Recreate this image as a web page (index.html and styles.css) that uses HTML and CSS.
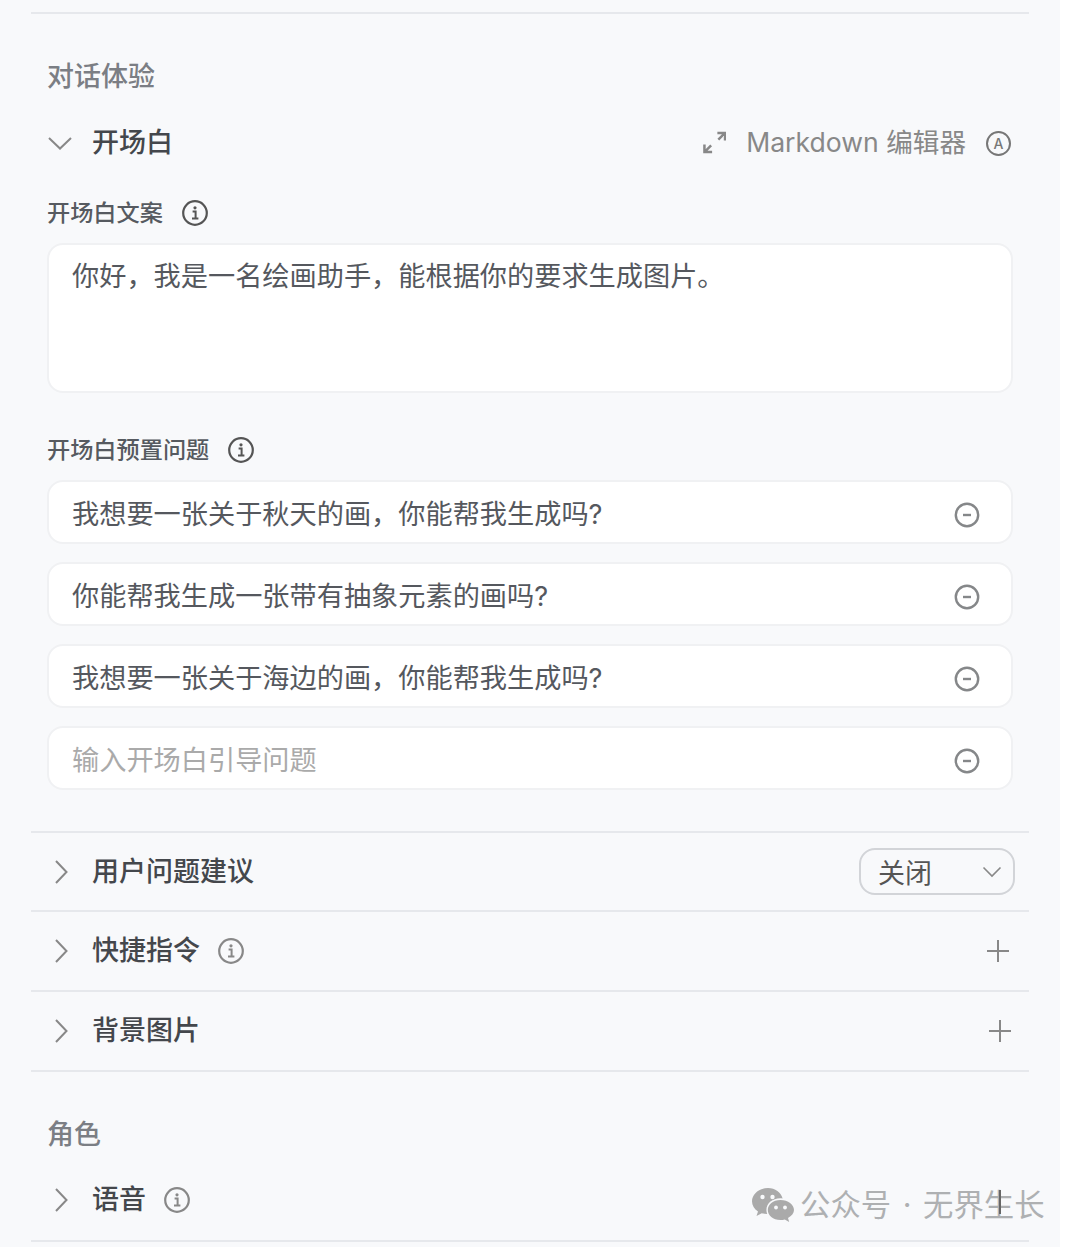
FILE: index.html
```html
<!DOCTYPE html>
<html lang="zh-CN">
<head>
    <meta charset="UTF-8">
    <meta name="viewport" content="width=device-width, initial-scale=1.0">
    <title>对话体验</title>
    <link rel="stylesheet" href="styles.css">
</head>
<body>
    <svg class="icon-defs" width="0" height="0">
        <symbol id="icon-info" viewBox="0 0 28 28">
            <circle cx="14" cy="14" r="11.8" fill="none" stroke="currentColor" stroke-width="2.2"/>
            <circle cx="14" cy="8.8" r="1.6" fill="currentColor"/>
            <path d="M11.6 12.4H14.6V19.2M11 19.6H17.4" fill="none" stroke="currentColor" stroke-width="2"/>
        </symbol>
        <symbol id="icon-minus" viewBox="0 0 26 26">
            <circle cx="13" cy="13" r="11.2" fill="none" stroke="currentColor" stroke-width="2.400"/>
            <path d="M9 13H17" fill="none" stroke="currentColor" stroke-width="2.400"/>
        </symbol>
        <symbol id="icon-right" viewBox="0 0 14 26">
            <path d="M2 2L12.5 13L2 24" fill="none" stroke="currentColor" stroke-width="2"/>
        </symbol>
        <symbol id="icon-plus" viewBox="0 0 24 24">
            <path d="M12 1V23M1 12H23" fill="none" stroke="currentColor" stroke-width="2"/>
        </symbol>
    </svg>

    <div class="panel">
        <hr class="rule top-rule">

        <h2 class="section-title">对话体验</h2>

        <div class="row-head open-head">
            <svg class="chevron-down" viewBox="0 0 26 14"><path d="M2 2L13 12.5L24 2" fill="none" stroke="currentColor" stroke-width="2"/></svg>
            <h3 class="row-title">开场白</h3>
            <div class="row-tools">
                <svg class="expand" viewBox="0 0 24 24"><path d="M15 2H23V10M22.500 2.500L16 9M1.500 14V22H9.500M2 21.500L8.500 15" fill="none" stroke="currentColor" stroke-width="2.600"/></svg>
                <span class="md-label">Markdown 编辑器</span>
                <span class="auto-badge">A</span>
            </div>
        </div>

        <div class="field-label first-label">开场白文案 <svg class="info"><use href="#icon-info"/></svg></div>
        <div class="card text-card">你好，我是一名绘画助手，能根据你的要求生成图片。</div>

        <div class="field-label second-label">开场白预置问题 <svg class="info"><use href="#icon-info"/></svg></div>
        <div class="question-list">
            <div class="card question"><span>我想要一张关于秋天的画，你能帮我生成吗?</span><svg class="remove"><use href="#icon-minus"/></svg></div>
            <div class="card question"><span>你能帮我生成一张带有抽象元素的画吗?</span><svg class="remove"><use href="#icon-minus"/></svg></div>
            <div class="card question"><span>我想要一张关于海边的画，你能帮我生成吗?</span><svg class="remove"><use href="#icon-minus"/></svg></div>
            <div class="card question placeholder"><span>输入开场白引导问题</span><svg class="remove"><use href="#icon-minus"/></svg></div>
        </div>

        <hr class="rule questions-rule">

        <div class="row-head fold suggest-row">
            <svg class="chevron"><use href="#icon-right"/></svg>
            <h3 class="row-title">用户问题建议</h3>
            <div class="select-box">关闭
                <svg class="select-arrow" viewBox="0 0 20 12"><path d="M1.500 1.500L10 10L18.500 1.500" fill="none" stroke="currentColor" stroke-width="1.600"/></svg>
            </div>
        </div>
        <hr class="rule">
        <div class="row-head fold">
            <svg class="chevron"><use href="#icon-right"/></svg>
            <h3 class="row-title">快捷指令</h3>
            <svg class="info row-info"><use href="#icon-info"/></svg>
            <svg class="plus"><use href="#icon-plus"/></svg>
        </div>
        <hr class="rule">
        <div class="row-head fold">
            <svg class="chevron"><use href="#icon-right"/></svg>
            <h3 class="row-title">背景图片</h3>
            <svg class="plus plus-low"><use href="#icon-plus"/></svg>
        </div>
        <hr class="rule">

        <h2 class="section-title role-title">角色</h2>

        <div class="row-head fold voice-row">
            <svg class="chevron"><use href="#icon-right"/></svg>
            <h3 class="row-title">语音</h3>
            <svg class="info row-info"><use href="#icon-info"/></svg>
        </div>
        <hr class="rule">
    </div>

    <div class="watermark">
        <svg class="wechat" viewBox="0 0 42 34">
            <path d="M16 0C7.200 0 0 5.900 0 13.200C0 17.400 2.300 21 6 23.400L4.500 28L9.800 25.200C11.500 25.700 13.300 26 15.200 26C14.700 24.700 14.400 23.300 14.400 21.900C14.400 15.300 20.600 10.200 28.200 10.200C29 10.200 29.800 10.300 30.600 10.400C29.100 4.500 23.100 0 16 0Z" fill="currentColor"/>
            <path d="M28.500 12C20.900 12 15.800 16.700 15.800 22C15.800 27.300 20.900 32 28.500 32C30 32 31.400 31.800 32.800 31.400L37.200 34L36 30C39.600 28 42 25.200 42 22C42 16.700 36.100 12 28.500 12Z" fill="currentColor"/>
            <circle cx="10.500" cy="9" r="2.200" fill="#f8f9fb"/>
            <circle cx="20.500" cy="9" r="2.200" fill="#f8f9fb"/>
            <circle cx="24" cy="19.500" r="1.900" fill="#f8f9fb"/>
            <circle cx="33" cy="19.500" r="1.900" fill="#f8f9fb"/>
        </svg>
        <span>公众号 · 无界生长</span>
        <i class="watermark-mark"></i>
    </div>
</body>
</html>
```

FILE: styles.css
```css
body {
    font-family: Inter, "Noto Sans CJK SC", sans-serif;
    background-color: #fff;
    color: #4f5258;
    margin: 0;
    padding: 0;
}

.icon-defs {
    position: absolute;
}

.panel {
    width: 998px;
    height: 1247px;
    padding: 0 31px;
    background-color: #f8f9fb;
    overflow: hidden;
}

.rule {
    height: 2px;
    margin: 0;
    border: none;
    background-color: #e6e8ec;
}

.top-rule {
    margin-top: 12px;
}

.section-title {
    margin: 44px 0 0 16px;
    font-size: 27px;
    line-height: 38px;
    font-weight: 500;
    color: #7b7e84;
}

.role-title {
    margin-top: 44px;
}

.row-head {
    display: flex;
    align-items: center;
    height: 78px;
}

.open-head {
    height: 56px;
    margin-top: 19px;
    padding: 0 16px;
}

.fold {
    padding-left: 23px;
}

.suggest-row {
    height: 77px;
}

.voice-row {
    height: 81px;
    margin-top: 5px;
}

.row-title {
    margin: 0;
    font-size: 27px;
    line-height: 38px;
    font-weight: 500;
    color: #44474c;
}

.chevron-down {
    width: 26px;
    height: 14px;
    margin-right: 19px;
    color: #888;
}

.chevron {
    width: 14px;
    height: 26px;
    margin-right: 24px;
    color: #888;
}

.row-tools {
    display: flex;
    align-items: center;
    margin-left: auto;
    color: #888;
}

.expand {
    width: 23px;
    height: 23px;
    margin: 0 20px 2px 0;
}

.md-label {
    padding-bottom: 2px;
    font-size: 26.6px;
    line-height: 38px;
    color: #888;
}

.auto-badge {
    display: flex;
    align-items: center;
    justify-content: center;
    box-sizing: border-box;
    width: 25px;
    height: 25px;
    margin: 0 2px 0 20px;
    border: 2px solid #777;
    border-radius: 50%;
    font-size: 14px;
    font-weight: 500;
    color: #777;
}

.field-label {
    display: flex;
    align-items: center;
    margin-left: 16px;
    font-size: 23.2px;
    line-height: 32px;
    font-weight: 500;
    color: #565a60;
}

.first-label {
    margin-top: 26px;
}

.second-label {
    margin-top: 41px;
}

.info {
    width: 28px;
    height: 28px;
    margin-left: 18px;
    color: #555;
}

.row-info {
    margin-left: 17px;
    color: #888;
}

.card {
    box-sizing: border-box;
    width: 966px;
    margin-left: 16px;
    background-color: #fff;
    border: 2px solid #f0f1f3;
    border-radius: 16px;
    font-size: 27.2px;
    line-height: 38px;
    color: #55585e;
}

.text-card {
    height: 150px;
    margin-top: 14px;
    padding: 13px 23px;
}

.question-list {
    display: flex;
    flex-direction: column;
    gap: 18px;
    margin-top: 14px;
}

.question {
    display: flex;
    align-items: center;
    justify-content: space-between;
    height: 64px;
    padding: 6px 31px 0 23px;
}

.placeholder {
    color: #aaa;
}

.remove {
    width: 26px;
    height: 26px;
    color: #858789;
}

.questions-rule {
    margin-top: 41px;
}

.select-box {
    display: flex;
    align-items: center;
    justify-content: space-between;
    box-sizing: border-box;
    width: 156px;
    height: 47px;
    margin-left: auto;
    margin-right: 14px;
    padding: 0 11px 0 17px;
    border: 2px solid #d2d4d8;
    border-radius: 16px;
    font-size: 27px;
    color: #555;
}

.select-arrow {
    width: 20px;
    height: 12px;
    color: #888;
}

.plus {
    width: 24px;
    height: 24px;
    margin-left: auto;
    margin-right: 19px;
    color: #888;
}

.plus-low {
    margin-right: 17px;
}

/* watermark sits over the last row */
.watermark {
    position: absolute;
    left: 752px;
    top: 1186px;
    display: flex;
    align-items: center;
    gap: 6px;
    font-size: 30.4px;
    line-height: 38px;
    word-spacing: 3px;
    color: #aeb0b2;
}

.wechat {
    width: 42px;
    height: 34px;
    color: #aaa;
}

.watermark-mark {
    position: absolute;
    left: 247px;
    top: 4px;
    width: 2px;
    height: 24px;
    background-color: #666;
}
```
